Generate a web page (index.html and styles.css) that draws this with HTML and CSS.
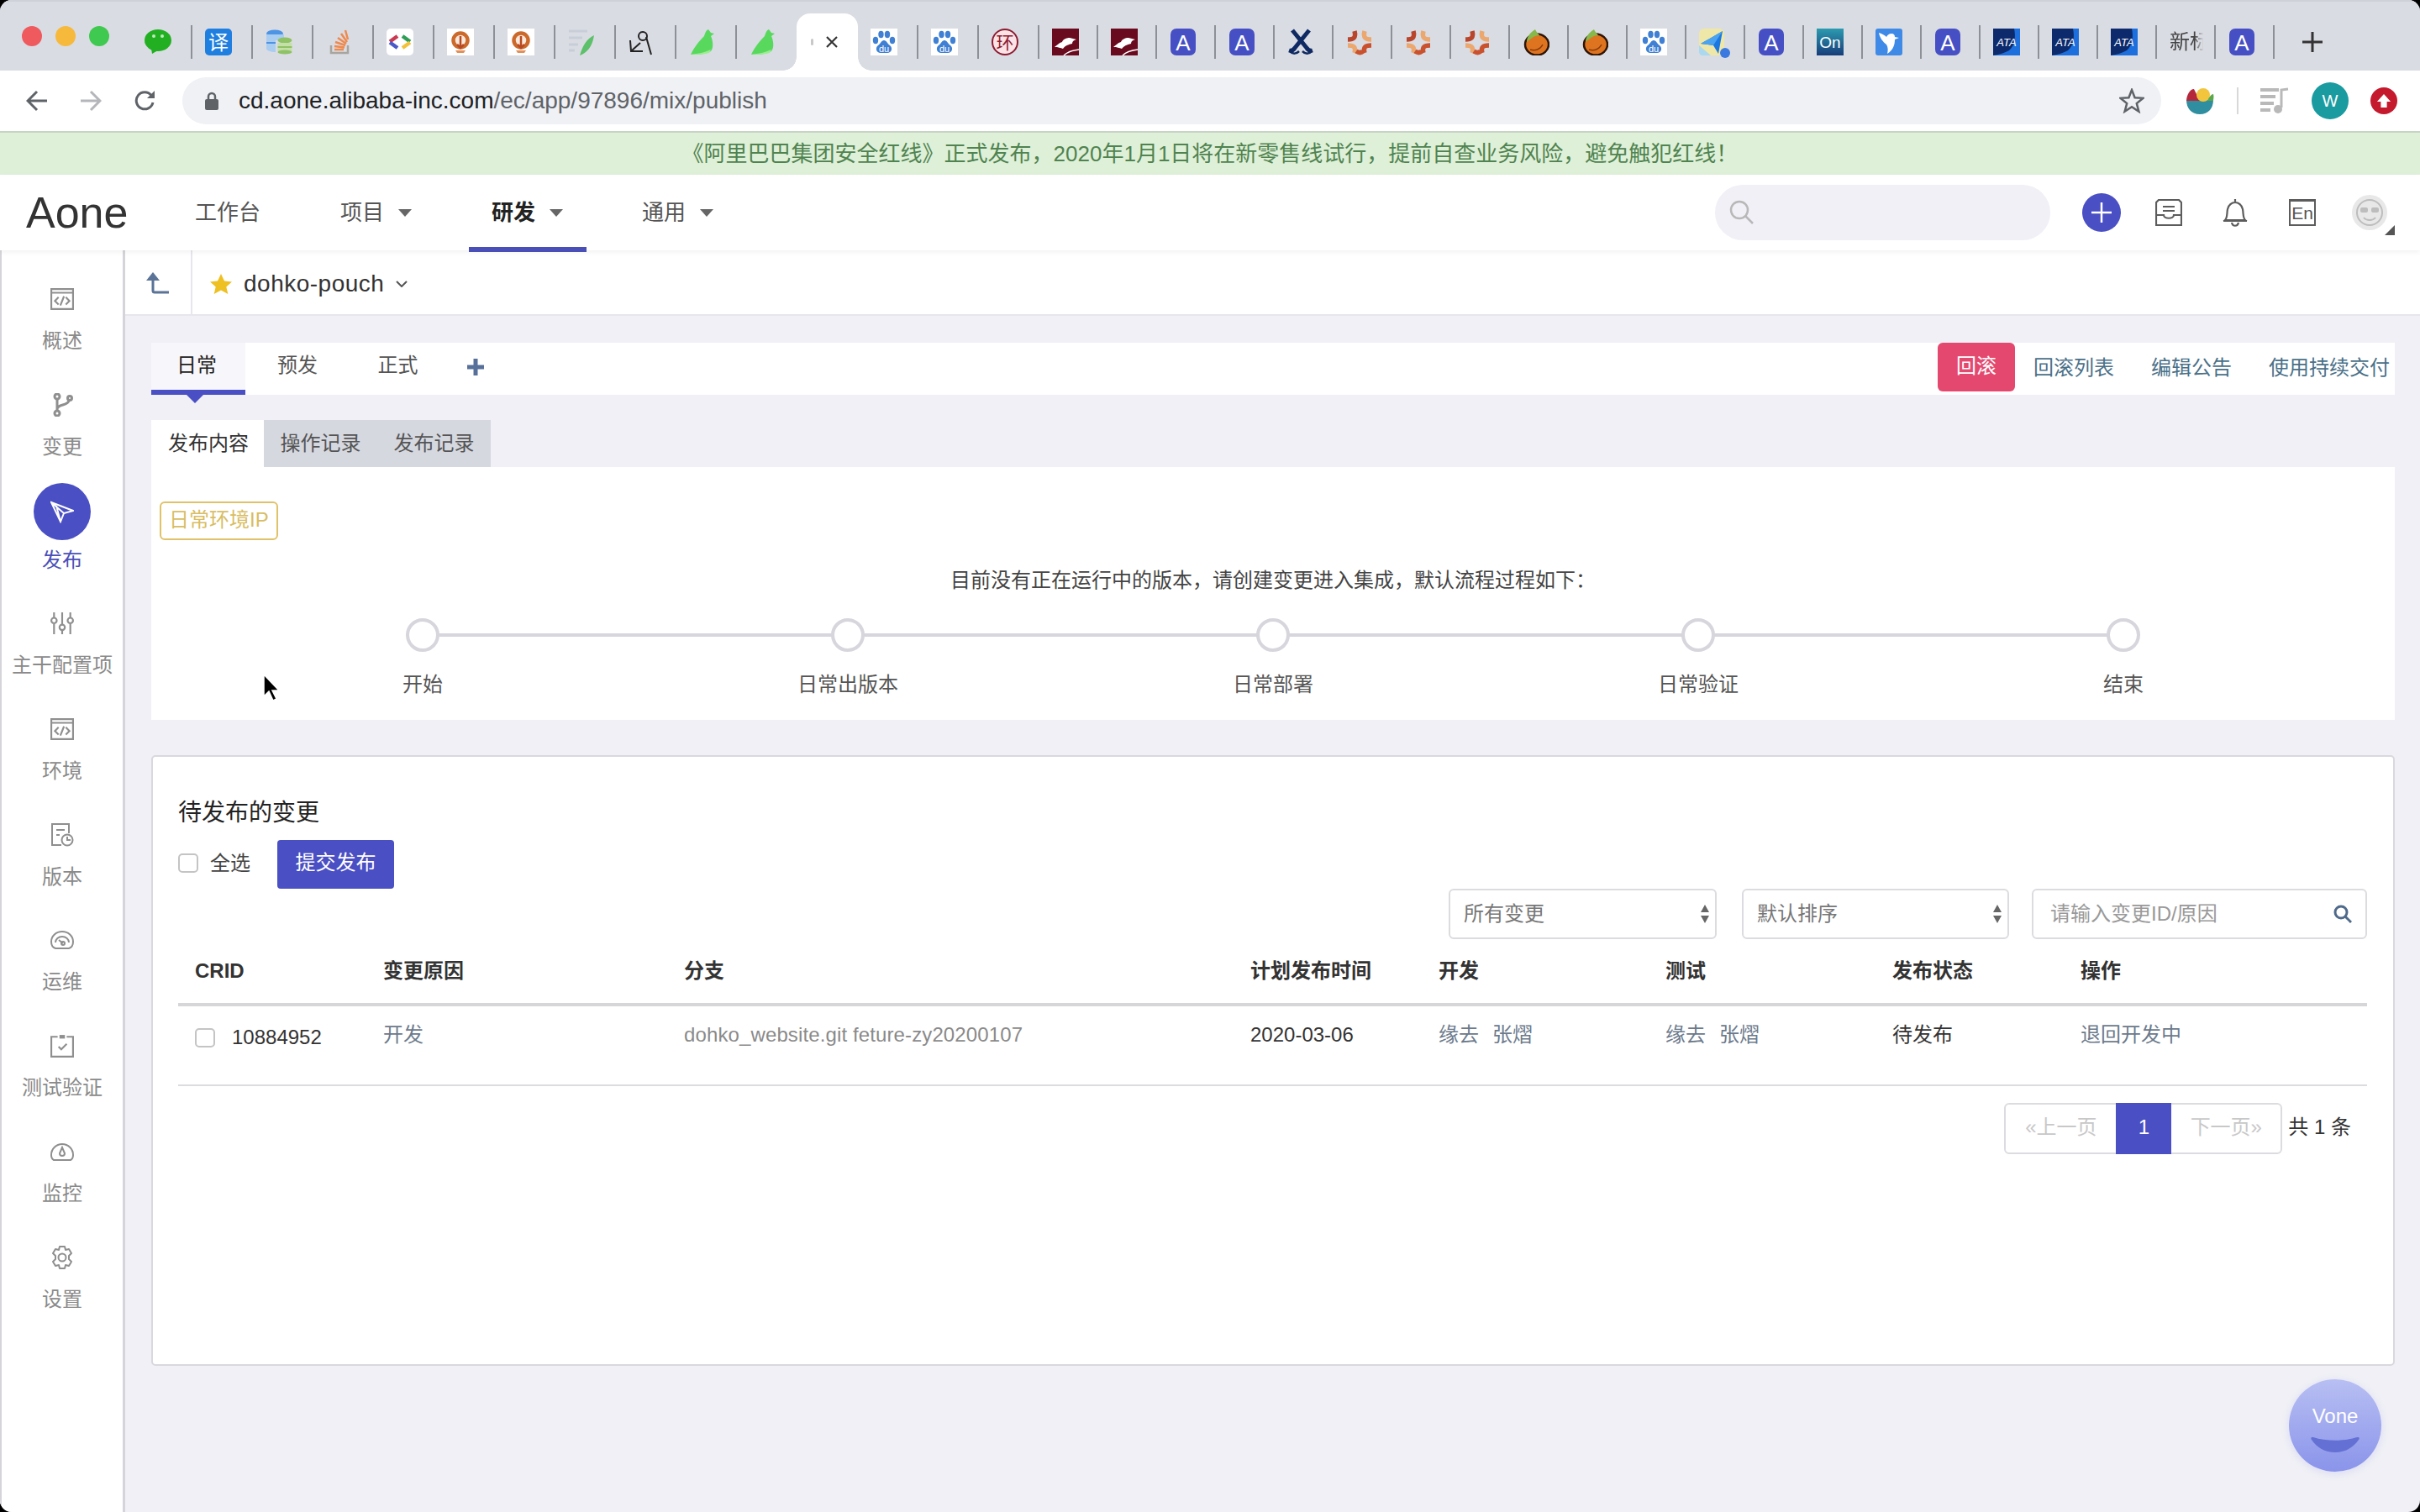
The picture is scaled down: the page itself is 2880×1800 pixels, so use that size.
FILE: index.html
```html
<!DOCTYPE html>
<html lang="zh-CN">
<head>
<meta charset="utf-8">
<title>dohko-pouch 发布</title>
<link rel="stylesheet" href="styles.css">
</head>
<body>
<svg class="defs" width="0" height="0">
  <defs>
    <symbol id="f-wechat" viewBox="0 0 32 32"><ellipse cx="16" cy="14" rx="16" ry="13" fill="#22b022"/><path d="M8 24l1 6 7-4z" fill="#22b022"/><circle cx="11" cy="9" r="2" fill="#bfeabf"/><circle cx="21" cy="9" r="2" fill="#bfeabf"/></symbol>
    <symbol id="f-yi" viewBox="0 0 32 32"><rect width="32" height="32" rx="5" fill="#1f7fe0"/><text x="16" y="25" text-anchor="middle" font-size="24" fill="#fff" class="ft">译</text></symbol>
    <symbol id="f-db" viewBox="0 0 32 32"><ellipse cx="11" cy="6" rx="10" ry="4.500" fill="#4d94e4"/><path d="M1 7v17c0 2 5 4 11 4V14h10V7z" fill="#a9cdf0"/><path d="M1 16h11v2H1z" fill="#4d94e4"/><ellipse cx="23" cy="14" rx="8.500" ry="3.500" fill="#8fc266"/><rect x="14.500" y="17" width="17" height="4" fill="#c5dfa8"/><rect x="14.500" y="21" width="17" height="2" fill="#8fc266"/><rect x="14.500" y="23" width="17" height="4" fill="#c5dfa8"/><ellipse cx="23" cy="28" rx="8.500" ry="2.500" fill="#8fc266"/></symbol>
    <symbol id="f-so" viewBox="0 0 32 32"><path d="M6 20v9h20v-9" fill="none" stroke="#a8a5a0" stroke-width="2.500"/><path d="M10 25h11M10 21l12 1.500M11 16l12 4M14 11l10 7M18 6l7 10M23 2l3 11" stroke="#ee8a4e" stroke-width="2.500" fill="none"/></symbol>
    <symbol id="f-code" viewBox="0 0 32 32"><rect width="32" height="32" rx="5" fill="#fff"/><g fill="none" stroke-width="4.500"><path d="M13 9L4 15.500" stroke="#c93a52"/><path d="M4 16.500L13 23" stroke="#4a58c8"/><path d="M19 9l9 6.500" stroke="#2f9e57"/><path d="M28 16.500L19 23" stroke="#f2c23a"/></g></symbol>
    <symbol id="f-bulb" viewBox="0 0 32 32"><rect width="32" height="32" fill="#fff"/><circle cx="16" cy="14" r="8.500" fill="#fbe9dc" stroke="#cc6a2c" stroke-width="4.500"/><path d="M16 9v14M12 19l4 4 4-4" stroke="#b84a22" stroke-width="2.500" fill="none"/><path d="M10 26h12l-2 3h-8z" fill="#e2905a"/></symbol>
    <symbol id="f-feather" viewBox="0 0 32 32"><path d="M1 3h22M1 11h16M1 19h11M1 26h7" stroke="#c8ced8" stroke-width="3"/><path d="M31 8C22 12 17 21 14 32 22 29 29 22 31 8z" fill="#5dc06a"/></symbol>
    <symbol id="f-glyph" viewBox="0 0 32 32"><circle cx="17" cy="9" r="5" fill="none" stroke="#222" stroke-width="2"/><path d="M21 10l6 21M2 14l1 13 14 0M3 27l11-10" fill="none" stroke="#222" stroke-width="2"/></symbol>
    <symbol id="f-bird" viewBox="0 0 32 32"><path d="M23 1c-3 1-4 5-5 8-5 5-12 13-16 22 8 0 17 0 24-4 4-5 2-14 0-18l4-3-4-1z" fill="#58d95e"/><path d="M2 31c6-1 16-2 24-6l-2 4c-8 2-15 2-22 2z" fill="#9aee8f"/></symbol>
    <symbol id="f-baidu" viewBox="0 0 32 32"><rect width="32" height="32" fill="#fff"/><g fill="#3f80d4"><ellipse cx="6" cy="14" rx="3.200" ry="4.200"/><ellipse cx="12.500" cy="7" rx="3.200" ry="4.200"/><ellipse cx="20" cy="7" rx="3.200" ry="4.200"/><ellipse cx="26" cy="14" rx="3.200" ry="4.200"/><path d="M16 14c-3 0-4 4-7 6-4 3-2 9 3 9h8c5 0 7-6 3-9-3-2-4-6-7-6z"/></g><text x="16" y="28" text-anchor="middle" font-size="11" fill="#fff" class="ft">du</text></symbol>
    <symbol id="f-huan" viewBox="0 0 32 32"><circle cx="16" cy="16" r="15" fill="#fbe3e6" stroke="#8c1c32" stroke-width="2"/><text x="16" y="24" text-anchor="middle" font-size="21" fill="#8c1c32" class="ft">环</text></symbol>
    <symbol id="f-horse" viewBox="0 0 32 32"><rect width="32" height="32" fill="#6a0a1e"/><path d="M3 22c3-2 5-5 9-6 1-3 5-5 9-5l8 2c-3 1-5 2-5 5-5 1-9 3-11 6-2-1-7-2-10-2z" fill="#fff"/><path d="M14 32c4-4 10-6 18-7" stroke="#fff" stroke-width="1.500" fill="none"/></symbol>
    <symbol id="f-a" viewBox="0 0 32 32"><rect x="1" width="30" height="32" rx="7" fill="#4650c4"/><text x="16" y="26" text-anchor="middle" font-size="26" fill="#fff" class="ft">A</text></symbol>
    <symbol id="f-scissors" viewBox="0 0 32 32"><g fill="none" stroke="#0f2a62"><path d="M6 2l17 21c2 3 4 4 7 3" stroke-width="5"/><path d="M26 2L9 23c-2 3-4 4-7 3" stroke-width="5"/><path d="M3 27c4 4 8 3 11 0M29 27c-4 4-8 3-11 0" stroke-width="2.500"/></g></symbol>
    <symbol id="f-mark" viewBox="0 0 32 32"><g fill="none" stroke-width="5.500"><path d="M10 3c2 8-1 10-8 10" stroke="#b8452c"/><path d="M22 3c-2 8 1 10 8 10" stroke="#eba76e"/><path d="M2 20c7 0 10 2 8 9" stroke="#eba76e"/><path d="M30 20c-7 0-10 2-8 9" stroke="#c9512e"/><path d="M12 27c3 2 6 2 8 0" stroke="#c9512e"/></g></symbol>
    <symbol id="f-fruit" viewBox="0 0 32 32"><ellipse cx="17" cy="19" rx="14" ry="12.500" fill="#df7420" stroke="#2e1404" stroke-width="2.500"/><path d="M5 16c0-7 5-12 10-15 1 3 4 5 5 7-6 0-10 4-15 8z" fill="#86b84c"/><path d="M9 25c6 2 12 0 15-6" stroke="#8a3c0e" stroke-width="1.500" fill="none"/></symbol>
    <symbol id="f-plane" viewBox="0 0 32 32"><rect x="0" y="0" width="30" height="32" rx="6" fill="#efe7a8"/><path d="M0 20l14 12H4c-2 0-4-2-4-4z" fill="#a9d8ef"/><path d="M2 18L28 3l-5 27-6-10z" fill="#1a78e0"/><path d="M2 18l15 2 11-17z" fill="#4aa3f0"/></symbol>
    <symbol id="f-on" viewBox="0 0 32 32"><defs><linearGradient id="on-g" x1="0" y1="0" x2="0" y2="1"><stop offset="0" stop-color="#2c9bb0"/><stop offset="1" stop-color="#173d7a"/></linearGradient></defs><rect width="32" height="32" fill="url(#on-g)"/><text x="16" y="23" text-anchor="middle" font-size="19" fill="#fff" class="ft">On</text></symbol>
    <symbol id="f-hbird" viewBox="0 0 32 32"><rect width="32" height="32" rx="3" fill="#3f8ae6"/><path d="M4 5c4 1 7 3 9 5 1-2 3-4 6-4 3 0 4 2 4 4l5 1-5 2c0 8-3 13-9 17 1-4 1-8-1-11C9 16 5 11 4 5z" fill="#fff"/></symbol>
    <symbol id="f-ata" viewBox="0 0 32 32"><rect width="32" height="32" fill="#1c6fdc"/><path d="M0 0h25c2 10 1 20-6 26-5 3-12 5-19 6z" fill="#0c2a6c"/><text x="16" y="21" text-anchor="middle" font-size="13" font-style="italic" fill="#fff" class="ft">ATA</text></symbol>
  </defs>
</svg>

<div class="screen">
  <div class="tabstrip">
    <div class="lights"><span class="light red"></span><span class="light amber"></span><span class="light green"></span></div>
    <div class="tab"><svg class="fav"><use href="#f-wechat"/></svg></div>
    <div class="tab"><svg class="fav"><use href="#f-yi"/></svg></div>
    <div class="tab"><svg class="fav"><use href="#f-db"/></svg></div>
    <div class="tab"><svg class="fav"><use href="#f-so"/></svg></div>
    <div class="tab"><svg class="fav"><use href="#f-code"/></svg></div>
    <div class="tab"><svg class="fav"><use href="#f-bulb"/></svg></div>
    <div class="tab"><svg class="fav"><use href="#f-bulb"/></svg></div>
    <div class="tab"><svg class="fav"><use href="#f-feather"/></svg></div>
    <div class="tab"><svg class="fav"><use href="#f-glyph"/></svg></div>
    <div class="tab"><svg class="fav"><use href="#f-bird"/></svg></div>
    <div class="tab plain"><svg class="fav"><use href="#f-bird"/></svg></div>
    <div class="tab-active"><span class="tab-dot"></span><svg class="tab-x" viewBox="0 0 16 16"><path d="M2 2l12 12M14 2L2 14"/></svg></div>
    <div class="tab"><svg class="fav"><use href="#f-baidu"/></svg></div>
    <div class="tab"><svg class="fav"><use href="#f-baidu"/></svg></div>
    <div class="tab"><svg class="fav"><use href="#f-huan"/></svg></div>
    <div class="tab narrow"><svg class="fav"><use href="#f-horse"/></svg></div>
    <div class="tab narrow"><svg class="fav"><use href="#f-horse"/></svg></div>
    <div class="tab narrow"><svg class="fav"><use href="#f-a"/></svg></div>
    <div class="tab narrow"><svg class="fav"><use href="#f-a"/></svg></div>
    <div class="tab narrow"><svg class="fav"><use href="#f-scissors"/></svg></div>
    <div class="tab narrow"><svg class="fav"><use href="#f-mark"/></svg></div>
    <div class="tab narrow"><svg class="fav"><use href="#f-mark"/></svg></div>
    <div class="tab narrow"><svg class="fav"><use href="#f-mark"/></svg></div>
    <div class="tab narrow"><svg class="fav"><use href="#f-fruit"/></svg></div>
    <div class="tab narrow"><svg class="fav"><use href="#f-fruit"/></svg></div>
    <div class="tab narrow"><svg class="fav"><use href="#f-baidu"/></svg></div>
    <div class="tab narrow"><svg class="fav"><use href="#f-plane"/></svg><span class="tab-badge"></span></div>
    <div class="tab narrow"><svg class="fav"><use href="#f-a"/></svg></div>
    <div class="tab narrow"><svg class="fav"><use href="#f-on"/></svg></div>
    <div class="tab narrow"><svg class="fav"><use href="#f-hbird"/></svg></div>
    <div class="tab narrow"><svg class="fav"><use href="#f-a"/></svg></div>
    <div class="tab narrow"><svg class="fav"><use href="#f-ata"/></svg></div>
    <div class="tab narrow"><svg class="fav"><use href="#f-ata"/></svg></div>
    <div class="tab narrow"><svg class="fav"><use href="#f-ata"/></svg></div>
    <div class="tab narrow"><span class="tab-title">新标</span></div>
    <div class="tab narrow"><svg class="fav"><use href="#f-a"/></svg></div>
    <svg class="tab-plus" viewBox="0 0 24 24"><path d="M12 0v24M0 12h24"/></svg>
  </div>

  <div class="toolbar">
    <svg class="tb-arrow" viewBox="0 0 26 26"><path d="M25 13H3M13 2L2 13l11 11"/></svg>
    <svg class="tb-arrow forward" viewBox="0 0 26 26"><path d="M1 13h22M13 2l11 11-11 11"/></svg>
    <svg class="tb-reload" viewBox="0 0 26 26"><path d="M22 15a10 10 0 1 1-2-8.500"/><path class="solid" d="M24 1v9h-9z"/></svg>
    <div class="omnibox">
      <svg class="lock" viewBox="0 0 16 22"><path class="lock-bow" d="M4 10V6a4 4 0 0 1 8 0v4"/><rect y="9" width="16" height="13" rx="2"/></svg>
      <span class="url"><span class="url-host">cd.aone.alibaba-inc.com</span>/ec/app/97896/mix/publish</span>
      <svg class="star-outline" viewBox="0 0 30 30"><path d="M15 2l3.600 9.200 9.900.6-7.700 6.300 2.600 9.600L15 22.300l-8.400 5.400 2.600-9.600-7.700-6.300 9.900-.6z"/></svg>
    </div>
    <svg class="ext-bowl" viewBox="0 0 34 32"><path d="M1 15h32c0 10-6 17-16 17S1 25 1 15z" fill="#2f8ea0"/><path d="M1 16C1 10 5 2 10 2l7 14z" fill="#b5283c"/><circle cx="21" cy="9" r="8" fill="#f2c53d"/><path d="M26 16c2-5 5-8 7-8 1 3 0 6 0 8z" fill="#5aa84a"/></svg>
    <span class="tb-sep"></span>
    <svg class="ext-music" viewBox="0 0 34 32"><path d="M0 3h22M0 11h18M0 19h16M0 27h12" stroke="#b9b9b9" stroke-width="4"/><path d="M25 24V3l8-1" fill="none" stroke="#b9b9b9" stroke-width="3"/><circle cx="21" cy="26" r="5" fill="#b9b9b9"/></svg>
    <span class="ext-w">W</span>
    <span class="ext-up"><svg viewBox="0 0 20 20"><path d="M10 1l9 10h-5v8H6v-8H1z"/></svg></span>
  </div>

  <div class="banner">《阿里巴巴集团安全红线》正式发布，2020年1月1日将在新零售线试行，提前自查业务风险，避免触犯红线！</div>

  <header class="appbar">
    <div class="logo">Aone</div>
    <nav class="topnav">
      <a class="topnav-item item-work">工作台</a>
      <a class="topnav-item item-proj">项目<i class="caret"></i></a>
      <a class="topnav-item item-dev on">研发<i class="caret"></i></a>
      <a class="topnav-item item-gen">通用<i class="caret"></i></a>
    </nav>
    <div class="search-pill"><svg viewBox="0 0 30 30"><circle cx="12" cy="12" r="10"/><path d="M19 19l9 9"/></svg></div>
    <span class="add-btn"><svg viewBox="0 0 24 24"><path d="M12 0v24M0 12h24"/></svg></span>
    <svg class="hd-ico inbox" viewBox="0 0 32 32"><path d="M4 1h24l3 3v27H1V4zM1 19h9c0 5 12 5 12 0h9M9 9h14M9 14h14"/></svg>
    <svg class="hd-ico bell" viewBox="0 0 32 34"><path d="M16 1v3M4 26c3-3 2-8 3-13 1-5 5-8 9-8s8 3 9 8c1 5 0 10 3 13zM2 27h28M12 29c1 5 7 5 8 0"/></svg>
    <span class="en-box">En</span>
    <span class="avatar"><svg viewBox="0 0 44 44"><circle cx="22" cy="22" r="21" fill="#e8e8e8"/><circle cx="22" cy="22" r="15" fill="none" stroke="#bdbdbd" stroke-width="2"/><rect x="11" y="16" width="9" height="6" rx="2" fill="#bdbdbd"/><rect x="24" y="16" width="9" height="6" rx="2" fill="#bdbdbd"/><path d="M15 28c3 4 11 4 14 0" fill="none" stroke="#bdbdbd" stroke-width="2"/></svg><i class="avatar-corner"></i></span>
  </header>

  <div class="workspace">
    <aside class="sidebar">
      <a class="side-item"><span class="side-ico"><svg viewBox="0 0 26 24"><path d="M1 1h24v22H1zM1 5h24M9 10l-4 4 4 4M17 10l4 4-4 4M15 9l-4 10"/></svg></span><span class="side-label">概述</span></a>
      <a class="side-item"><span class="side-ico"><svg viewBox="0 0 26 28"><circle cx="7" cy="4" r="3" stroke-width="3"/><circle cx="7" cy="24" r="3" stroke-width="3"/><circle cx="22" cy="6" r="2.500" stroke-width="3"/><path d="M7 7v14M7 19c0-6 13-4 14-10" stroke-width="3"/></svg></span><span class="side-label">变更</span></a>
      <a class="side-item on"><span class="side-ico"><svg viewBox="0 0 28 28"><path d="M1 3l26 10-11 3-4 10zM1 3l15 13M7 7l5 19"/></svg></span><span class="side-label">发布</span></a>
      <a class="side-item"><span class="side-ico"><svg viewBox="0 0 26 26"><path d="M4 1v6M4 14v11M13 1v13M13 21v4M22 1v6M22 14v11"/><circle cx="4" cy="10" r="3"/><circle cx="13" cy="17.500" r="3"/><circle cx="22" cy="10" r="3"/></svg></span><span class="side-label">主干配置项</span></a>
      <a class="side-item"><span class="side-ico"><svg viewBox="0 0 26 24"><path d="M1 1h24v22H1zM1 5h24M9 10l-4 4 4 4M17 10l4 4-4 4M15 9l-4 10"/></svg></span><span class="side-label">环境</span></a>
      <a class="side-item"><span class="side-ico"><svg viewBox="0 0 28 28"><path d="M13 26H2V1h20v11M7 8h10M7 14h4"/><circle cx="20" cy="20" r="6.500"/><path d="M20 16v4h4"/></svg></span><span class="side-label">版本</span></a>
      <a class="side-item"><span class="side-ico"><svg viewBox="0 0 28 22"><path d="M6 21h16c3-1 5-4 5-8A13 12 0 0 0 1 13c0 4 2 7 5 8zM6 14a8 7 0 0 1 16 0M10 11l5 4"/><circle cx="15" cy="15" r="2"/></svg></span><span class="side-label">运维</span></a>
      <a class="side-item"><span class="side-ico"><svg viewBox="0 0 26 26"><path d="M8 3H1v22h24V3h-7M9 14l3 3 6-6"/><path class="solid" d="M10 1h6v4h-6z"/></svg></span><span class="side-label">测试验证</span></a>
      <a class="side-item"><span class="side-ico"><svg viewBox="0 0 28 22"><path d="M4 21h20c2-1 3-3 3-6A13 13 0 0 0 1 15c0 3 1 5 3 6zM14 6l-3 7a3 3 0 0 0 6 0z"/></svg></span><span class="side-label">监控</span></a>
      <a class="side-item"><span class="side-ico"><svg viewBox="0 0 28 28"><path d="M11 1h6l1 4 4-1 3 5-3 3v4l3 3-3 5-4-1-1 4h-6l-1-4-4 1-3-5 3-3v-4L3 9l3-5 4 1z" stroke-linejoin="round"/><circle cx="14" cy="14" r="4.500"/></svg></span><span class="side-label">设置</span></a>
    </aside>

    <main class="main">
      <div class="subheader">
        <span class="back-cell"><svg viewBox="0 0 28 28"><path class="solid" d="M8 1l8 10H0z"/><path d="M8 9v14a2 2 0 0 0 2 2h17"/></svg></span>
        <span class="crumb">
          <svg class="crumb-star" viewBox="0 0 26 24"><path d="M13 0l4 8.500 9 1-6.700 6 2 8.500L13 19.500 4.700 24l2-8.500L0 9.500l9-1z"/></svg>
          <span class="crumb-name">dohko-pouch</span>
          <svg class="crumb-chev" viewBox="0 0 14 8"><path d="M1 1l6 6 6-6"/></svg>
        </span>
      </div>

      <div class="content">
        <div class="env-tabs">
          <a class="env-tab on">日常</a>
          <a class="env-tab">预发</a>
          <a class="env-tab">正式</a>
          <svg class="env-add" viewBox="0 0 20 20"><path d="M10 0v20M0 10h20"/></svg>
          <span class="env-spacer"></span>
          <a class="btn-danger">回滚</a>
          <a class="env-link">回滚列表</a>
          <a class="env-link">编辑公告</a>
          <a class="env-link">使用持续交付</a>
        </div>

        <div class="sub-tabs">
          <a class="sub-tab on">发布内容</a>
          <a class="sub-tab">操作记录</a>
          <a class="sub-tab">发布记录</a>
        </div>

        <section class="panel">
          <span class="tag">日常环境IP</span>
          <p class="panel-msg">目前没有正在运行中的版本，请创建变更进入集成，默认流程过程如下：</p>
          <ol class="steps">
            <li class="step"><i class="step-dot"></i><span>开始</span></li>
            <li class="step"><i class="step-dot"></i><span>日常出版本</span></li>
            <li class="step"><i class="step-dot"></i><span>日常部署</span></li>
            <li class="step"><i class="step-dot"></i><span>日常验证</span></li>
            <li class="step"><i class="step-dot"></i><span>结束</span></li>
          </ol>
        </section>

        <section class="card">
          <h2 class="card-title">待发布的变更</h2>
          <div class="card-actions">
            <label class="check-all"><input type="checkbox" class="check"><span>全选</span></label>
            <a class="btn-primary">提交发布</a>
          </div>
          <div class="filters">
            <div class="select sel-a"><span>所有变更</span><svg viewBox="0 0 10 22"><path d="M5 0l5 9H0zM5 22L0 13h10z"/></svg></div>
            <div class="select sel-b"><span>默认排序</span><svg viewBox="0 0 10 22"><path d="M5 0l5 9H0zM5 22L0 13h10z"/></svg></div>
            <div class="search-box"><span>请输入变更ID/原因</span><svg viewBox="0 0 22 22"><circle cx="9" cy="9" r="7"/><path d="M14 14l7 7"/></svg></div>
          </div>
          <table class="changes">
            <colgroup><col class="c1"><col class="c2"><col class="c3"><col class="c4"><col class="c5"><col class="c6"><col class="c7"><col class="c8"></colgroup>
            <thead>
              <tr><th>CRID</th><th>变更原因</th><th>分支</th><th>计划发布时间</th><th>开发</th><th>测试</th><th>发布状态</th><th>操作</th></tr>
            </thead>
            <tbody>
              <tr>
                <td class="td-id"><input type="checkbox" class="check"><span>10884952</span></td>
                <td class="link">开发</td>
                <td class="muted">dohko_website.git feture-zy20200107</td>
                <td>2020-03-06</td>
                <td class="link"><span class="person">缘去</span><span class="person">张熠</span></td>
                <td class="link"><span class="person">缘去</span><span class="person">张熠</span></td>
                <td>待发布</td>
                <td class="link">退回开发中</td>
              </tr>
            </tbody>
          </table>
          <div class="pager-row">
            <div class="pager">
              <a class="pg pg-prev">«上一页</a>
              <a class="pg pg-cur">1</a>
              <a class="pg pg-next">下一页»</a>
            </div>
            <span class="pager-total">共 1 条</span>
          </div>
        </section>
      </div>
    </main>
  </div>

  <a class="vone"><span class="vone-text">Vone</span><svg class="vone-smile" viewBox="0 0 58 18"><path d="M3 0C18 5 40 5 55 0c3-1 3 2 2 3-6 9-16 15-28 15S7 12 1 3C0 2 0-1 3 0z"/></svg></a>
  <svg class="cursor" viewBox="0 0 22 34"><path d="M2 1v26l6-6 5 11 4-2-5-10h8z" fill="#000" stroke="#fff" stroke-width="1.500"/></svg>
</div>
</body>
</html>
```

FILE: styles.css
```css
* { box-sizing: border-box; }
html, body { margin: 0; padding: 0; background: #000; }
body {
  width: 2880px;
  height: 1800px;
  overflow: hidden;
  font-family: "Liberation Sans", "Noto Sans CJK SC", sans-serif;
  font-size: 24px;
  line-height: 34px;
  color: #333;
}
a { color: inherit; text-decoration: none; }
i { display: block; }
.defs { position: absolute; }
.ft { font-family: "Liberation Sans", "Noto Sans CJK SC", sans-serif; }

.screen {
  position: relative;
  width: 2880px;
  height: 1800px;
  border-radius: 14px;
  overflow: hidden;
  background: #f0f0f6;
  display: flex;
  flex-direction: column;
}

/* browser tab strip */
.tabstrip {
  height: 84px;
  flex: none;
  background: #dadce3;
  border-top: 2px solid #cfd1d8;
  display: flex;
  align-items: flex-start;
  padding-top: 28px;
}
.lights {
  width: 157px;
  flex: none;
  display: flex;
  gap: 16px;
  padding: 1px 0 0 26px;
}
.light { width: 24px; height: 24px; border-radius: 50%; }
.light.red { background: #ee5a5e; }
.light.amber { background: #f6b93b; }
.light.green { background: #3fc950; }
.tab {
  position: relative;
  width: 72px;
  height: 40px;
  flex: none;
  display: flex;
  align-items: center;
  padding-left: 15px;
  border-right: 2px solid #8d9096;
}
.tab.narrow { width: 70px; }
.tab.plain { width: 71px; border-right: 0; }
.fav { width: 32px; height: 32px; flex: none; }
.tab-active {
  position: relative;
  width: 73px;
  height: 68px;
  margin-top: -14px;
  flex: none;
  background: #fff;
  border-radius: 16px 16px 0 0;
  display: flex;
  align-items: center;
  padding: 0 0 0 17px;
}
.tab-active::before,
.tab-active::after {
  content: "";
  position: absolute;
  bottom: 0;
  width: 16px;
  height: 16px;
}
.tab-active::before { left: -16px; background: radial-gradient(circle at 0 0, #dadce3 15.500px, #fff 16px); }
.tab-active::after { right: -16px; background: radial-gradient(circle at 100% 0, #dadce3 15.500px, #fff 16px); }
.tab-dot { width: 3px; height: 8px; background: #c8c8c8; border-radius: 2px; margin-right: 14px; }
.tab-x { width: 16px; height: 16px; fill: none; stroke: #333; stroke-width: 2.200; }
.tab-badge {
  position: absolute;
  left: 40px;
  top: 27px;
  width: 12px;
  height: 12px;
  border-radius: 50%;
  background: #3a7ae0;
}
.tab-title {
  width: 48px;
  flex: none;
  white-space: nowrap;
  font-size: 24px;
  color: #444;
  -webkit-mask-image: linear-gradient(90deg, #000 62%, transparent 84%);
  mask-image: linear-gradient(90deg, #000 62%, transparent 84%);
}
.tab-plus {
  width: 24px;
  height: 24px;
  margin: 8px 0 0 33px;
  fill: none;
  stroke: #333;
  stroke-width: 3;
}

/* browser toolbar */
.toolbar {
  height: 72px;
  flex: none;
  background: #fff;
  display: flex;
  align-items: center;
  padding-left: 31px;
}
.tb-arrow { width: 26px; height: 26px; fill: none; stroke: #5f6368; stroke-width: 3; }
.tb-arrow.forward { margin-left: 38px; stroke: #b4b6ba; }
.tb-reload { width: 26px; height: 26px; margin-left: 39px; fill: none; stroke: #5f6368; stroke-width: 3; }
.tb-reload .solid { fill: #5f6368; stroke: none; }
.omnibox {
  width: 2355px;
  height: 56px;
  margin-left: 31px;
  flex: none;
  border-radius: 28px;
  background: #eff1f5;
  display: flex;
  align-items: center;
  padding: 0 20px 0 27px;
}
.lock { width: 16px; height: 22px; fill: #5f6368; flex: none; }
.lock-bow { fill: none; stroke: #5f6368; stroke-width: 2.500; }
.url { margin-left: 24px; font-size: 28px; color: #5f6368; white-space: nowrap; }
.url-host { color: #202124; }
.star-outline { width: 30px; height: 30px; margin-left: auto; fill: none; stroke: #5f6368; stroke-width: 2.500; }
.ext-bowl { width: 34px; height: 32px; margin-left: 29px; flex: none; }
.tb-sep { width: 2px; height: 32px; margin-left: 27px; background: #d8d8d8; flex: none; }
.ext-music { width: 34px; height: 32px; margin-left: 26px; flex: none; }
.ext-w {
  width: 44px;
  height: 44px;
  margin-left: 27px;
  flex: none;
  border-radius: 50%;
  background: #1a9ba0;
  color: #fff;
  font-size: 20px;
  line-height: 44px;
  text-align: center;
}
.ext-up {
  width: 32px;
  height: 32px;
  margin-left: 26px;
  flex: none;
  border-radius: 50%;
  background: #c5192d;
  display: flex;
  align-items: center;
  justify-content: center;
}
.ext-up svg { width: 18px; height: 18px; fill: #fff; }

/* announcement */
.banner {
  height: 52px;
  flex: none;
  border-top: 2px solid #c7d3c4;
  background: #dff0d8;
  color: #4f8350;
  font-size: 26px;
  line-height: 51px;
  text-align: center;
}

/* app header */
.appbar {
  position: relative;
  z-index: 2;
  height: 90px;
  flex: none;
  background: #fff;
  box-shadow: 0 2px 6px rgba(0, 0, 0, 0.06);
  display: flex;
  align-items: center;
}
.logo {
  width: 232px;
  flex: none;
  padding-left: 31px;
  font-size: 52px;
  line-height: 60px;
  color: #333;
}
.topnav { display: flex; height: 90px; flex: none; align-self: flex-start; }
.topnav-item {
  display: flex;
  align-items: center;
  height: 92px;
  padding-top: 4px;
  font-size: 26px;
  color: #555;
  border-bottom: 6px solid transparent;
}
.item-work { margin-right: 95px; }
.item-proj { margin-right: 88px; }
.item-dev { width: 140px; padding-left: 27px; margin-left: -20px; margin-right: 66px; }
.topnav-item.on { color: #222; font-weight: 700; border-bottom-color: #4a4fb8; }
.caret {
  width: 0;
  height: 0;
  margin-left: 17px;
  border-left: 8px solid transparent;
  border-right: 8px solid transparent;
  border-top: 9px solid #666;
}
.search-pill {
  width: 399px;
  height: 66px;
  margin-left: auto;
  flex: none;
  border-radius: 33px;
  background: #f0f0f6;
  display: flex;
  align-items: center;
  padding-left: 17px;
}
.search-pill svg { width: 30px; height: 30px; fill: none; stroke: #b8b8b8; stroke-width: 2.500; }
.add-btn {
  width: 46px;
  height: 46px;
  margin-left: 38px;
  flex: none;
  border-radius: 50%;
  background: #4a4fc4;
  display: flex;
  align-items: center;
  justify-content: center;
}
.add-btn svg { width: 24px; height: 24px; fill: none; stroke: #fff; stroke-width: 2.500; }
.hd-ico { flex: none; fill: none; stroke: #5c5c5c; stroke-width: 2.200; }
.inbox { width: 32px; height: 32px; margin-left: 41px; }
.bell { width: 32px; height: 34px; margin-left: 47px; }
.en-box {
  width: 32px;
  height: 32px;
  margin-left: 48px;
  flex: none;
  border: 2px solid #5c5c5c;
  border-top-width: 3px;
  font-size: 21px;
  line-height: 28px;
  text-align: center;
  color: #555;
}
.avatar {
  position: relative;
  width: 44px;
  height: 44px;
  margin: 0 38px 0 42px;
  flex: none;
}
.avatar svg { width: 44px; height: 44px; display: block; }
.avatar-corner {
  position: absolute;
  right: -8px;
  bottom: -5px;
  width: 0;
  height: 0;
  border-left: 12px solid transparent;
  border-bottom: 12px solid #555;
}

/* lower workspace */
.workspace { flex: 1; min-height: 0; display: flex; }
.sidebar {
  width: 149px;
  flex: none;
  background: #fff;
  border-left: 2px solid #d4d4da;
  border-right: 3px solid #d4d4da;
  padding-top: 41px;
  display: flex;
  flex-direction: column;
}
.side-item {
  height: 125.800px;
  flex: none;
  display: flex;
  flex-direction: column;
  align-items: center;
  color: #8a8a8a;
}
.side-ico {
  height: 34px;
  flex: none;
  display: flex;
  align-items: center;
  justify-content: center;
}
.side-ico svg { width: 28px; height: 28px; fill: none; stroke: #8f8f8f; stroke-width: 2; }
.side-ico .solid { fill: #8f8f8f; stroke: none; }
.side-label { margin-top: 16px; white-space: nowrap; }
.side-item.on { height: 134.400px; color: #4a4fb8; }
.side-item.on .side-ico {
  width: 68px;
  height: 68px;
  margin-top: -16px;
  border-radius: 50%;
  background: #4a4fc4;
}
.side-item.on .side-ico svg { stroke: #fff; }
.side-item.on .side-label { margin-top: 7px; }

.main { flex: 1; min-width: 0; display: flex; flex-direction: column; }
.subheader {
  height: 78px;
  flex: none;
  background: #fff;
  border-bottom: 2px solid #e6e6ec;
  display: flex;
  align-items: stretch;
}
.back-cell {
  width: 80px;
  flex: none;
  padding-top: 2px;
  border-right: 2px solid #e6e6ec;
  display: flex;
  align-items: center;
  justify-content: center;
}
.back-cell svg { width: 28px; height: 28px; fill: none; stroke: #5a7396; stroke-width: 3; }
.back-cell .solid { fill: #5a7396; stroke: none; }
.crumb { display: flex; align-items: center; padding: 4px 0 0 21px; }
.crumb-star { width: 26px; height: 24px; fill: #eec022; }
.crumb-name { margin-left: 14px; font-size: 28px; letter-spacing: 0.5px; color: #333; }
.crumb-chev { width: 14px; height: 8px; margin-left: 14px; fill: none; stroke: #555; stroke-width: 2; }

.content { flex: 1; padding: 32px 30px 0 31px; }
.env-tabs {
  height: 62px;
  background: #fff;
  display: flex;
  align-items: flex-start;
}
.env-tab {
  position: relative;
  width: 118px;
  height: 62px;
  flex: none;
  text-align: center;
  line-height: 54px;
  color: #555;
}
.env-tab.on {
  width: 112px;
  padding-right: 4px;
  color: #222;
  background: #f7f6fa;
  border-bottom: 6px solid #4a4fc4;
}
.env-tab.on::after {
  content: "";
  position: absolute;
  left: 42px;
  bottom: -16px;
  border-left: 10px solid transparent;
  border-right: 10px solid transparent;
  border-top: 10px solid #4a4fc4;
}
.env-tab:nth-child(2) { margin-left: 3px; }
.env-tab:nth-child(3) { padding-left: 3px; }
.env-add { width: 20px; height: 20px; margin: 19px 0 0 25px; fill: none; stroke: #56709a; stroke-width: 5; }
.env-spacer { flex: 1; }
.btn-danger {
  width: 92px;
  height: 58px;
  flex: none;
  border-radius: 6px;
  background: #e4486f;
  color: #fff;
  line-height: 56px;
  text-align: center;
}
.env-link { flex: none; margin-left: 44px; line-height: 60px; color: #4a7088; }
.btn-danger + .env-link { margin-left: 22px; }
.env-link:last-child { margin-right: 6px; }

.sub-tabs { display: flex; margin-top: 30px; height: 56px; width: 404px; background: #d6d8e0; }
.sub-tab { width: 135px; flex: none; text-align: center; line-height: 56px; color: #555; }
.sub-tab.on { width: 134px; padding-left: 2px; background: #fff; color: #333; }

.panel {
  height: 301px;
  background: #fff;
  padding: 41px 0 0 0;
  display: flex;
  flex-direction: column;
  align-items: flex-start;
}
.tag {
  height: 46px;
  margin-left: 10px;
  padding: 0 9px;
  border: 2px solid #e0c268;
  border-radius: 6px;
  color: #d9bd62;
  line-height: 40px;
  white-space: nowrap;
}
.panel-msg { align-self: stretch; margin: 31px 0 0; text-align: center; color: #444; }
.steps { display: flex; list-style: none; margin: 28px 0 0 70px; padding: 0; }
.step {
  position: relative;
  width: 506px;
  display: flex;
  flex-direction: column;
  align-items: center;
  color: #555;
}
.step:not(:last-child)::before {
  content: "";
  position: absolute;
  left: 50%;
  top: 18px;
  width: 100%;
  height: 4px;
  background: #d6d6dc;
}
.step-dot {
  position: relative;
  width: 40px;
  height: 40px;
  border: 4px solid #d6d6dc;
  border-radius: 50%;
  background: #fff;
}
.step span { margin-top: 22px; }

.card {
  height: 727px;
  margin-top: 42px;
  padding: 47px 31px 0 30px;
  background: #fff;
  border: 2px solid #d8d8de;
  border-radius: 5px;
}
.card-title { margin: 0; font-size: 28px; font-weight: 400; line-height: 40px; color: #222; }
.card-actions { display: flex; align-items: center; margin-top: 12px; height: 58px; }
.check-all { display: flex; align-items: center; width: 118px; color: #444; margin-top: -3px; }
.check {
  appearance: none;
  -webkit-appearance: none;
  width: 24px;
  height: 23px;
  margin: 0 14px 0 0;
  border: 2px solid #c4c4c4;
  border-radius: 5px;
  background: #fff;
  flex: none;
}
.btn-primary {
  width: 139px;
  height: 58px;
  border-radius: 4px;
  background: #4a4fc4;
  color: #fff;
  text-align: center;
  line-height: 54px;
}
.filters { display: flex; justify-content: flex-end; height: 60px; }
.select, .search-box {
  height: 60px;
  border: 2px solid #dcdce0;
  border-radius: 6px;
  display: flex;
  align-items: center;
  justify-content: space-between;
  background: #fff;
  color: #777;
}
.select { padding: 0 7px 0 16px; }
.select svg { width: 10px; height: 22px; fill: #666; }
.sel-a { width: 319px; margin-right: 30px; }
.sel-b { width: 318px; margin-right: 27px; }
.search-box { width: 399px; padding: 0 16px 0 20px; color: #999; }
.search-box svg { width: 22px; height: 22px; fill: none; stroke: #4f6a8a; stroke-width: 3; }

.changes { width: 2605px; table-layout: fixed; border-collapse: collapse; }
.c1 { width: 224px; }
.c2 { width: 358px; }
.c3 { width: 674px; }
.c4 { width: 224px; }
.c5, .c6 { width: 270px; }
.c7 { width: 224px; }
.c8 { width: 361px; }
.changes th {
  height: 78px;
  padding: 0 0 0 20px;
  text-align: left;
  font-weight: 700;
  color: #333;
  border-bottom: 4px solid #d6d6d8;
}
.changes td {
  height: 96px;
  padding: 17px 0 0 20px;
  vertical-align: top;
  border-bottom: 2px solid #dcdcdf;
  color: #333;
  white-space: nowrap;
}
.changes td.td-id { padding-top: 20px; }
.td-id .check { vertical-align: -4px; margin-right: 20px; }
.changes td.link { color: #6c7a8c; }
.changes td.muted { color: #8a8a8a; letter-spacing: 0.12px; }
.person { margin-right: 16px; }
.pager-row { display: flex; justify-content: flex-end; align-items: center; margin-top: 20px; padding-right: 19px; }
.pager {
  display: flex;
  width: 331px;
  height: 61px;
  border: 2px solid #dcdce0;
  border-radius: 6px;
  line-height: 54px;
  text-align: center;
  color: #c8c8c8;
}
.pg-prev { width: 131px; }
.pg-cur { width: 66px; margin: -2px 0; line-height: 58px; background: #4a4fc4; color: #fff; }
.pg-next { flex: 1; }
.pager-total { margin-left: 7px; margin-top: -3px; color: #333; }

/* overlays */
.vone {
  position: absolute;
  left: 2724px;
  top: 1642px;
  width: 110px;
  height: 110px;
  border-radius: 50%;
  background: linear-gradient(180deg, #b8bff3, #8a94ea);
  box-shadow: 0 2px 10px rgba(120, 130, 230, 0.18);
  color: #fff;
  text-align: center;
}
.vone-text { position: absolute; left: 0; right: 0; top: 27px; font-size: 24px; line-height: 34px; }
.vone-smile {
  position: absolute;
  left: 26px;
  top: 69px;
  width: 58px;
  height: 18px;
  fill: #6470d4;
}
.cursor { position: absolute; left: 312px; top: 802px; width: 22px; height: 34px; }
```
